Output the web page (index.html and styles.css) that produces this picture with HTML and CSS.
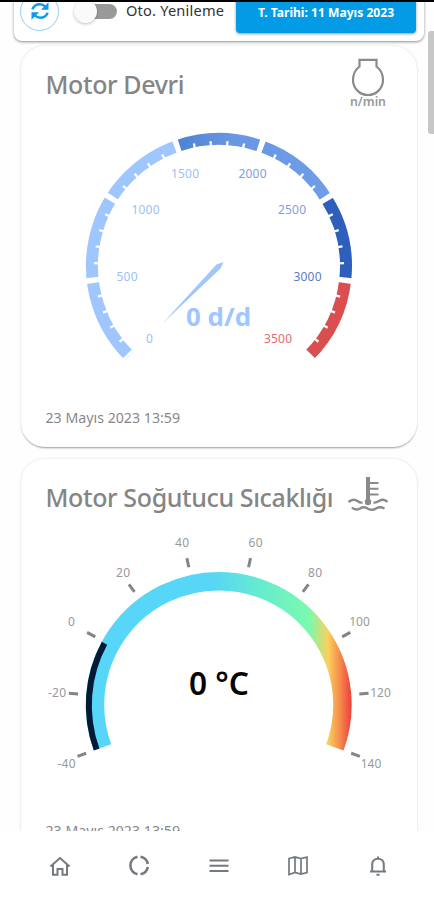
FILE: index.html
```html
<!DOCTYPE html>
<html lang="tr">
<head>
<meta charset="utf-8">
<title>Motor</title>
<link rel="stylesheet" href="styles.css">
</head>
<body>
<main class="scroller">
  <header class="toolbar">
    <button class="refresh" aria-label="Yenile">
      <svg width="20" height="20" viewBox="0 0 20 20" fill="none" stroke="#0c9be8" stroke-width="2.4">
        <path d="M2.300 8.300Q4.500 3.200 9.800 3.200Q13 3.200 15.800 6"/><path d="M18.500 1.200V8.800H10.900Z" fill="#0c9be8" stroke="none"/>
        <path d="M17.700 11.700Q15.500 16.800 10.200 16.800Q7 16.800 4.200 14"/><path d="M1.500 18.800V11.200H9.100Z" fill="#0c9be8" stroke="none"/>
      </svg>
    </button>
    <span class="switch"><span class="thumb"></span></span>
    <span class="switch-label">Oto. Yenileme</span>
    <button class="date-button">T. Tarihi: 11 Mayıs 2023</button>
  </header>

  <section class="card">
    <div class="card-head">
      <h2>Motor Devri</h2>
      <svg class="icon" width="42" height="52" viewBox="347 57 42 52">
        <path d="M359.500 59.800H376.500V66.500Q383 71.500 383 80A15 15 0 0 1 353 80Q353 71.500 359.500 66.500Z" fill="none" stroke="#8a8a8a" stroke-width="2.200"/>
        <text class="unit" x="368" y="106" textLength="36" lengthAdjust="spacingAndGlyphs">n/min</text>
      </svg>
    </div>
    <svg class="gauge" viewBox="21 120 396 260">
      <defs><linearGradient id="mid" gradientUnits="userSpaceOnUse" x1="178" y1="0" x2="330" y2="0">
        <stop offset="0" stop-color="#4f82d3"/><stop offset=".35" stop-color="#6896e3"/><stop offset="1" stop-color="#6f9de8"/>
      </linearGradient></defs>
      <g fill="none" stroke-width="12">
        <path d="M129.200 355.800A127 127 0 0 1 178.410 145.580" stroke="#9fc6ff"/>
        <path d="M178.410 145.580A127 127 0 0 1 327.150 199.910" stroke="url(#mid)"/>
        <path d="M326.040 198.140A127 127 0 0 1 345.200 280.210" stroke="#2e5fbd"/>
        <path d="M345.200 280.210A127 127 0 0 1 308.800 355.800" stroke="#db4e50"/>
        <circle cx="219" cy="266" r="122.500" pathLength="466.667" transform="rotate(135 219 266)" stroke="#fff" class="minor"/>
        <circle cx="219" cy="266" r="127" pathLength="466.667" transform="rotate(135 219 266)" stroke="#fff" class="major"/>
      </g>
      <g class="ticks-text light">
        <text x="149.500" y="342.500">0</text><text x="127" y="280.500" textLength="21">500</text>
        <text x="145.500" y="214" textLength="28">1000</text><text x="185" y="177.500" textLength="28">1500</text>
      </g>
      <g class="ticks-text mid">
        <text x="252.500" y="177.500" textLength="28">2000</text><text x="292" y="214" textLength="28">2500</text>
      </g>
      <text class="ticks-text dark" x="307.500" y="280.500" textLength="28">3000</text>
      <text class="ticks-text red" x="278" y="342.500" textLength="28">3500</text>
      <path d="M162 324L216.500 264.500L223.500 262L220.500 268.500Z" fill="#9fc6ff"/>
      <text class="rpm" x="218.500" y="326" textLength="65" lengthAdjust="spacingAndGlyphs">0 d/d</text>
    </svg>
    <p class="stamp">23 Mayıs 2023 13:59</p>
  </section>

  <section class="card">
    <div class="card-head">
      <h2>Motor Soğutucu Sıcaklığı</h2>
      <svg class="icon" width="42" height="52" viewBox="347 470 42 52" fill="none" stroke="#8a8a8a">
        <path d="M368 477V500" stroke-width="4"/>
        <circle cx="368" cy="502" r="3.200" fill="#8a8a8a" stroke="none"/>
        <path d="M369 483H378.500M369 488.800H378.500M369 494.600H378.500" stroke-width="2"/>
        <path d="M348.500 502Q353 498 357.500 501Q360 503 362.500 502.500M373.500 502.500Q376 503 379 501Q384 498 387.500 502M352 507.500Q355.500 511 360 508.500Q364 506 368 508.700Q372 511 376 508.500Q380 506 384.500 508.500" stroke-width="2.400"/>
      </svg>
    </div>
    <svg class="gauge" viewBox="21 533 396 260">
      <defs><linearGradient id="heat" gradientUnits="userSpaceOnUse" x1="85.500" y1="0" x2="352" y2="0">
        <stop offset="0" stop-color="#58d6fa"/><stop offset=".48" stop-color="#57d6f6"/><stop offset=".65" stop-color="#66ebd0"/>
        <stop offset=".84" stop-color="#7bfaad"/><stop offset=".91" stop-color="#fbd05c"/><stop offset=".955" stop-color="#f58a4c"/><stop offset="1" stop-color="#ee3b3c"/>
      </linearGradient></defs>
      <path d="M102.500 747.300A123.700 123.700 0 1 1 334.900 747.300" fill="none" stroke="url(#heat)" stroke-width="18.500"/>
      <path d="M96.600 749.500A130 130 0 0 1 104.500 643.300" fill="none" stroke="#021a35" stroke-width="6"/>
      <g stroke="#858585" stroke-width="3">
        <path d="M359.700 705H369" transform="rotate(20 218.700 705)"/>
        <path d="M359.700 705H369" transform="rotate(-4.440 218.700 705)"/>
        <path d="M359.700 705H369" transform="rotate(-28.890 218.700 705)"/>
        <path d="M359.700 705H369" transform="rotate(-53.330 218.700 705)"/>
        <path d="M359.700 705H369" transform="rotate(-77.780 218.700 705)"/>
        <path d="M359.700 705H369" transform="rotate(-102.220 218.700 705)"/>
        <path d="M359.700 705H369" transform="rotate(-126.670 218.700 705)"/>
        <path d="M359.700 705H369" transform="rotate(-151.110 218.700 705)"/>
        <path d="M359.700 705H369" transform="rotate(-175.560 218.700 705)"/>
        <path d="M359.700 705H369" transform="rotate(-200 218.700 705)"/>
      </g>
      <g class="ticks-text gray">
        <text x="66.500" y="768" textLength="18">-40</text><text x="57" y="696.500" textLength="18">-20</text>
        <text x="71.500" y="626">0</text><text x="123" y="577" textLength="14">20</text>
        <text x="182" y="546.500" textLength="14">40</text><text x="255.500" y="546.500" textLength="14">60</text>
        <text x="315" y="577" textLength="14">80</text><text x="359.500" y="626" textLength="20.500">100</text>
        <text x="380.500" y="696.500" textLength="20.500">120</text><text x="371" y="768" textLength="20.500">140</text>
      </g>
      <text class="temp" x="219" y="694.500" textLength="60" lengthAdjust="spacingAndGlyphs">0 °C</text>
    </svg>
    <p class="stamp">23 Mayıs 2023 13:59</p>
  </section>
  <span class="scrollbar"></span>
</main>

<nav class="tabs">
  <a><svg width="24" height="24" viewBox="0 0 24 24"><path d="M2.500 12.500L12 4L21.500 12.500M5 11V20.800H9.500V15H14.500V20.800H19V11"/></svg></a>
  <a><svg width="24" height="24" viewBox="0 0 24 24"><path stroke-width="2.600" d="M10.500 2.700A9 9 0 0 0 10.500 20.300M13.500 2.700A9 9 0 0 1 20.800 10M20.800 13A9 9 0 0 1 13.500 20.300"/></svg></a>
  <a><svg width="24" height="24" viewBox="0 0 24 24"><path d="M2.500 6.500H21.500M2.500 11.800H21.500M2.500 17H21.500"/></svg></a>
  <a><svg width="24" height="24" viewBox="0 0 24 24"><path stroke-width="1.700" d="M3 4.500L9 3L15 4.500L21 3V18.500L15 20L9 18.500L3 20.500ZM9 3V18.500M15 4.500V20"/></svg></a>
  <a><svg width="24" height="24" viewBox="0 0 24 24"><path d="M4 17.500H20M6.200 17.500V10.500C6.200 7 8.500 4.700 12 4.700S17.800 7 17.800 10.500V17.500M12 2.500V4.500M10.500 20.700H13.500"/></svg></a>
</nav>
</body>
</html>
```
FILE: styles.css
```css
* { box-sizing: border-box; }
body {
  margin: 0;
  height: 900px;
  display: flex;
  flex-direction: column;
  border-top: 2px solid #000;
  background: #fefefe;
  font-family: "Noto Sans", "Open Sans", sans-serif;
  overflow: hidden;
}
button { font: inherit; padding: 0; }
.scroller {
  position: relative;
  flex: 0 0 829px;
  overflow: hidden;
  padding: 0 17px 0 21px;
}
.toolbar {
  display: flex;
  align-items: center;
  height: 60px;
  margin: -21px -7px 5px;
  padding: 0 8px 0 6px;
  background: #fff;
  border-radius: 8px;
  box-shadow: 0 1px 3px rgba(0,0,0,.45);
}
.refresh {
  display: grid;
  place-items: center;
  width: 39px;
  height: 39px;
  border: 1px solid #8fd0f4;
  border-radius: 50%;
  background: #fff;
}
.switch {
  width: 34px;
  height: 15px;
  margin-left: 24px;
  border-radius: 8px;
  background: #999;
  display: flex;
  align-items: center;
}
.thumb {
  flex: 0 0 23px;
  height: 23px;
  margin-left: -9px;
  border-radius: 50%;
  background: #fafafa;
  box-shadow: 0 1px 3px rgba(0,0,0,.25);
}
.switch-label {
  margin: -2px 0 0 9px;
  width: 98px;
  font-size: 14.600px;
  letter-spacing: .2px;
  white-space: nowrap;
  color: #333;
}
.date-button {
  width: 180px;
  height: 40px;
  margin: 3px 0 0 auto;
  border: 0;
  border-radius: 4px;
  background: #039be5;
  color: #fff;
  font-size: 12.100px;
  font-weight: 700;
  white-space: nowrap;
  box-shadow: 0 1px 3px rgba(0,0,0,.4);
}
.card {
  height: 401px;
  margin-bottom: 12px;
  background: #fff;
  border-radius: 24px;
  box-shadow: 0 2px 2px -1px rgba(0,0,0,.35), 0 0 3px rgba(0,0,0,.13);
}
.card-head {
  display: flex;
  justify-content: space-between;
  height: 74px;
  padding: 11px 28px 0 24.500px;
}
h2 {
  margin: 9px 0 0;
  font-size: 25px;
  line-height: 36px;
  font-weight: 500;
  letter-spacing: -.38px;
  color: #858585;
  white-space: nowrap;
}
.icon { flex: none; }
.unit { font-size: 12px; font-weight: 600; fill: #999; text-anchor: middle; }
.gauge { display: block; width: 396px; height: 260px; }
.minor { stroke-width: 5px; stroke-dasharray: 1.400 8.600; stroke-dashoffset: .7; }
.major { stroke-width: 14px; stroke-dasharray: 3.200 46.800; stroke-dashoffset: 1.6; }
.ticks-text { font-size: 12px; text-anchor: middle; }
.light { fill: #9abffa; }
.mid { fill: #7e9ee6; }
.dark { fill: #5b79c6; }
.red { fill: #e66b6c; }
.gray { fill: #999; }
.rpm { font-size: 25px; font-weight: 700; fill: #9fc6ff; text-anchor: middle; }
.temp { font-size: 32px; font-weight: 600; fill: #050505; text-anchor: middle; }
.stamp {
  margin: 26px 0 0 24.500px;
  font-size: 14.200px;
  line-height: 24px;
  color: #888;
}
.scrollbar {
  position: absolute;
  top: 29px;
  right: 0;
  width: 6px;
  height: 103px;
  border-radius: 3px 0 0 3px;
  background: #c7c7c7;
}
.tabs {
  flex: 1;
  display: grid;
  grid-template-columns: repeat(5, 79.500px);
  justify-content: center;
  padding-left: 3px;
  background: #fff;
}
.tabs a { display: grid; justify-items: center; padding-top: 23px; }
.tabs svg { fill: none; stroke: #747a80; stroke-width: 2; }
```
